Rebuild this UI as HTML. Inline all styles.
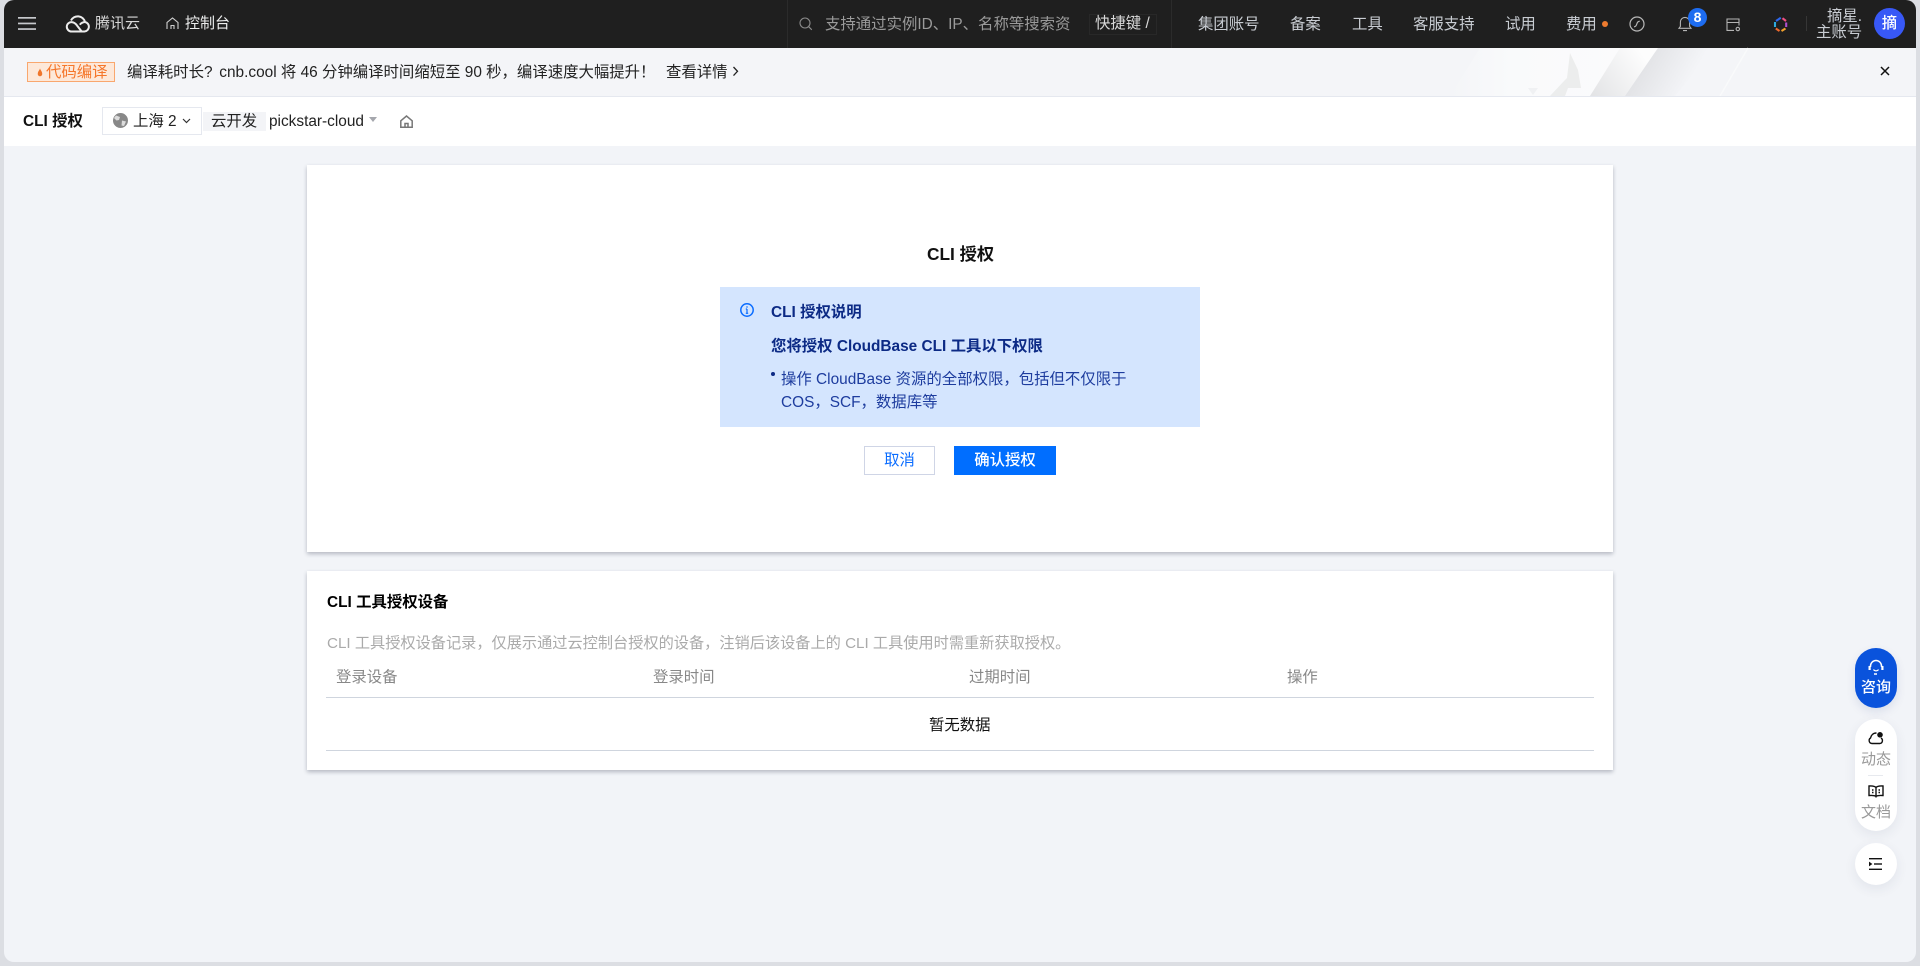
<!DOCTYPE html>
<html lang="zh-CN">
<head>
<meta charset="utf-8">
<title>CLI 授权</title>
<style>
html,body{margin:0;padding:0;width:1920px;height:966px;overflow:hidden;background:#dcdee3;}
body{font-family:"Liberation Sans","Noto Sans CJK SC",sans-serif;font-size:15.4px;position:relative;}
#win{position:absolute;left:4px;top:0;width:1912px;height:962px;background:#f2f4f8;border-radius:10px;overflow:hidden;}
#root{position:absolute;left:-4px;top:0;width:1920px;height:966px;}
.a{position:absolute;white-space:nowrap;}
.t{position:absolute;white-space:nowrap;line-height:20px;height:20px;margin-top:1px;}
svg{position:absolute;overflow:visible;}
.n{color:#c8ccd2;}
.card{position:absolute;background:#fff;box-shadow:0 2px 4px rgba(54,58,80,.32);}
</style>
</head>
<body>
<div id="win"><div id="root">

<!-- top bar -->
<div class="a" style="left:0;top:0;width:1920px;height:48px;background:#1f1f1f"></div>
<svg style="left:18px;top:17px" width="18" height="13" fill="#c6c8cc"><rect width="18" height="1.7"/><rect y="5.6" width="18" height="1.7"/><rect y="11.2" width="18" height="1.7"/></svg>
<svg style="left:65px;top:15px" width="26" height="18" viewBox="0 0 26 18" fill="none" stroke="#ececec" stroke-width="2"><path d="M6.500 16.500h13a4.800 4.800 0 0 0 .5-9.500 7.500 7.500 0 0 0-14-1.500"/><path d="M6.500 16.500a4.700 4.700 0 1 1 0-9.400c2.600 0 4.200 1.500 5.600 3.500l4.300 5.500"/><path d="M20.500 7c-2.500 0-4.400 1-5.700 2.700"/></svg>
<div class="t" style="left:95px;top:13px;font-size:15px;color:#d8d8d8">腾讯云</div>
<svg style="left:166px;top:17px" width="13" height="13" viewBox="0 0 13 13" fill="none" stroke="#d0d0d0" stroke-width="1.1"><path d="M1 12V5.500L6.500 1 12 5.500V12M5 12V8.500h3V12"/></svg>
<div class="t" style="left:185px;top:13px;font-size:15px;color:#eceded">控制台</div>

<div class="a" style="left:787px;top:0;width:1px;height:48px;background:#2b2b2b"></div>
<svg style="left:799px;top:17px" width="14" height="14" viewBox="0 0 14 14" fill="none" stroke="#8b8b8b" stroke-width="1.1"><circle cx="6" cy="6" r="5"/><path d="m9.800 9.800 3 3"/></svg>
<div class="t" style="left:825px;top:14px;color:#9a9a9a">支持通过实例ID、IP、名称等搜索资</div>
<div class="a" style="left:1089px;top:14px;width:66px;height:19px;border:1px solid #282828"></div>
<div class="t" style="left:1095px;top:13px;color:#d8d8d8">快捷键 /</div>
<div class="a" style="left:1171px;top:0;width:1px;height:48px;background:#2b2b2b"></div>

<div class="t n" style="left:1198px;top:14px">集团账号</div>
<div class="t n" style="left:1290px;top:14px">备案</div>
<div class="t n" style="left:1352px;top:14px">工具</div>
<div class="t n" style="left:1413px;top:14px">客服支持</div>
<div class="t n" style="left:1505px;top:14px">试用</div>
<div class="t n" style="left:1566px;top:14px">费用</div>
<div class="a" style="left:1602px;top:20.5px;width:6px;height:6px;border-radius:50%;background:#ed7b2f"></div>
<svg style="left:1629px;top:16px" width="16" height="16" viewBox="0 0 16 16" fill="none" stroke="#b8b8b8" stroke-width="1.2"><circle cx="8" cy="8" r="7"/><path d="M5 10.800c1.600 0 2.300-1 2.800-2.800s1.200-2.800 3-2.800"/></svg>
<svg style="left:1678px;top:15px" width="14" height="17" viewBox="0 0 14 17" fill="none" stroke="#b4b4b4" stroke-width="1.1"><path d="M1 13.300h12l-1.400-2V7a4.600 4.600 0 0 0-9.200 0v4.300zM5 15.600h4"/></svg>
<div class="a" style="left:1688px;top:8px;width:19px;height:19px;border-radius:50%;background:#1d6cf0;color:#fff;font-weight:bold;font-size:14px;line-height:19px;text-align:center">8</div>
<svg style="left:1726px;top:18px" width="15" height="14" viewBox="0 0 15 14" fill="none" stroke="#b4b4b4" stroke-width="1.100"><path d="M8 12.400H1V1h12v6.500M1 4.500h12"/><circle cx="11.800" cy="11" r="1.700"/></svg>
<svg style="left:1773px;top:16px" width="15" height="17" viewBox="0 0 15 17" fill="none" stroke-width="2.100"><path d="M3 5 7.800 1.800" stroke="#2d68ee"/><path d="M9.500 2.200 13 5" stroke="#ef4f83"/><path d="M13.200 6.500V11" stroke="#b04fd0"/><path d="M12.500 12.500 8.500 15" stroke="#f2a12c"/><path d="M6.500 15 2.800 12.500" stroke="#f0692c"/><path d="M2 11V6" stroke="#2eaadc"/></svg>
<div class="a" style="left:1806px;top:16px;width:1px;height:15px;background:#363636"></div>
<div class="t" style="left:1827px;top:6px;font-size:15.4px;color:#c8ccd2;line-height:20px">摘星.</div>
<div class="t" style="left:1816px;top:22px;font-size:15.4px;color:#c8ccd2;line-height:20px">主账号</div>
<div class="a" style="left:1874px;top:8px;width:31px;height:31px;border-radius:50%;background:#3858f6;color:#fff;font-size:15.4px;font-weight:500;line-height:32px;text-align:center">摘</div>

<!-- banner -->
<div class="a" style="left:0;top:48px;width:1920px;height:48px;background:#f4f5f8"></div>
<svg style="left:1400px;top:48px" width="420" height="48" viewBox="0 0 420 48">
<defs>
<linearGradient id="g1" x1="0" y1="0" x2="1" y2="0"><stop offset="0" stop-color="#f4f5f8"/><stop offset="0.35" stop-color="#f9fafb"/><stop offset="1" stop-color="#fbfbfc"/></linearGradient>
<linearGradient id="g2" gradientUnits="userSpaceOnUse" x1="238" y1="15" x2="285" y2="42"><stop offset="0" stop-color="#e0e1e4"/><stop offset="1" stop-color="#f4f5f8"/></linearGradient>
<linearGradient id="g3" gradientUnits="userSpaceOnUse" x1="190" y1="48" x2="245" y2="10"><stop offset="0" stop-color="#e2e3e5"/><stop offset="1" stop-color="#fdfdfd"/></linearGradient>
</defs>
<path d="M50 48 80 0H225L190 48Z" fill="url(#g1)"/>
<path d="M150 48 165 32 167 30 170 5 178 22 181 40 168 40 165 48Z" fill="#eceded"/>
<path d="M128 40h10l-5 7z" fill="#f0f1f3"/>
<path d="M190 48 220 0H258L225 48Z" fill="url(#g3)"/>
<path d="M225 48 258 0H315L275 48Z" fill="url(#g2)"/>
<path d="M320 48 348 0" stroke="#f9fafb" stroke-width="1.500" fill="none"/>
</svg>
<div class="a" style="left:0;top:96px;width:1920px;height:1px;background:#e5e8ef"></div>

<div class="a" style="left:27px;top:62px;width:86px;height:18px;border:1px solid #f9a76e;background:#fde8d9"></div>
<svg style="left:37px;top:68px" width="6" height="9" viewBox="0 0 7 12"><path d="M3.500 .5C4 3 6.500 4.500 6.500 8a3 3 0 0 1-6 0C.5 4.500 3 3 3.500 .5Z" fill="#f0762b"/></svg>
<div class="t" style="left:46px;top:62px;color:#f5762a">代码编译</div>
<div class="t" style="left:127px;top:62px;color:#222">编译耗时长<span style="margin-right:2.500px">?</span> cnb.cool 将 46 分钟编译时间缩短至 90 秒，编译速度大幅提升！</div>
<div class="t" style="left:666px;top:62px;color:#222">查看详情</div>
<svg style="left:732px;top:66px" width="7" height="11" fill="none" stroke="#222" stroke-width="1.300"><path d="m1.500 1 4 4.300-4 4.300"/></svg>
<svg style="left:1880px;top:66px" width="10" height="10" fill="none" stroke="#111" stroke-width="1.500"><path d="m1 1 8 8M9 1 1 9"/></svg>

<!-- subheader -->
<div class="a" style="left:0;top:97px;width:1920px;height:49px;background:#fff"></div>
<div class="t" style="left:23px;top:111px;font-weight:bold;color:#111">CLI 授权</div>
<div class="a" style="left:102px;top:107px;width:98px;height:26px;border:1px solid #e5e8ef"></div>
<svg style="left:113px;top:113px" width="15" height="15" viewBox="0 0 15 15"><circle cx="7.500" cy="7.500" r="7.500" fill="#888"/><path d="M3 2.500 7 4 6 7 3.500 7.500 1 5ZM9 7.500l4 1-2 4.500-2.500-.5z" fill="#dcdcdc"/></svg>
<div class="t" style="left:133px;top:111px;color:#222">上海 2</div>
<svg style="left:182px;top:118px" width="9" height="6" fill="none" stroke="#333" stroke-width="1.200"><path d="m1 1 3.500 3.500L8 1"/></svg>
<div class="a" style="left:203px;top:112px;width:63px;height:19px;background:#f3f4f7"></div>
<div class="t" style="left:211px;top:111px;color:#222">云开发</div>
<div class="t" style="left:269px;top:111px;color:#222">pickstar-cloud</div>
<svg style="left:369px;top:117px" width="8" height="5"><path d="M0 0h8L4 5z" fill="#a5a7ad"/></svg>
<svg style="left:400px;top:115px" width="13" height="13" viewBox="0 0 13 13" fill="none" stroke="#777" stroke-width="1.500"><path d="M.8 5.800 6.500 1l5.700 4.800V12.200H.8zM5 12.500V8.500h3v4"/></svg>

<!-- card 1 -->
<div class="card" style="left:307px;top:165px;width:1306px;height:387px"></div>
<div class="t" style="left:927px;top:243px;font-size:17.3px;font-weight:bold;color:#111">CLI 授权</div>
<div class="a" style="left:720px;top:287px;width:480px;height:140px;background:#d4e5fe"></div>
<svg style="left:740px;top:303px" width="14" height="14" viewBox="0 0 14 14" fill="none" stroke="#0a6cff" stroke-width="1.500"><circle cx="7" cy="7" r="6.200"/><path d="M7 6v4.300M5.800 10.300h2.400M5.800 6h1.200" stroke-width="1.200"/><path d="M7 3.400v1.200" stroke-width="1.500"/></svg>
<div class="t" style="left:771px;top:302px;font-weight:bold;color:#0c2a85">CLI 授权说明</div>
<div class="t" style="left:771px;top:336px;font-weight:bold;color:#0c2a85">您将授权 CloudBase CLI 工具以下权限</div>
<div class="a" style="left:771px;top:372px;width:4px;height:4px;border-radius:50%;background:#0c2a85"></div>
<div class="t" style="left:781px;top:369px;color:#1d3c9e">操作 CloudBase 资源的全部权限，包括但不仅限于</div>
<div class="t" style="left:781px;top:392px;color:#1d3c9e">COS，SCF，数据库等</div>
<div class="a" style="left:864px;top:446px;width:69px;height:27px;border:1px solid #cfd5e6;background:#fff;color:#0a6cff;text-align:center;line-height:27px">取消</div>
<div class="a" style="left:954px;top:446px;width:102px;height:29px;background:#006eff;color:#fff;text-align:center;line-height:30px;font-weight:500">确认授权</div>

<!-- card 2 -->
<div class="card" style="left:307px;top:571px;width:1306px;height:199px"></div>
<div class="t" style="left:327px;top:592px;font-weight:bold;color:#000">CLI 工具授权设备</div>
<div class="t" style="left:327px;top:633px;font-size:15.2px;color:#aaa">CLI 工具授权设备记录，仅展示通过云控制台授权的设备，注销后该设备上的 CLI 工具使用时需重新获取授权。</div>
<div class="t" style="left:336px;top:667px;color:#888">登录设备</div>
<div class="t" style="left:653px;top:667px;color:#888">登录时间</div>
<div class="t" style="left:969px;top:667px;color:#888">过期时间</div>
<div class="t" style="left:1287px;top:667px;color:#888">操作</div>
<div class="a" style="left:326px;top:697px;width:1268px;height:1px;background:#cfd5de"></div>
<div class="t" style="left:929px;top:715px;color:#111">暂无数据</div>
<div class="a" style="left:326px;top:750px;width:1268px;height:1px;background:#cfd5de"></div>

<!-- floating -->
<div class="a" style="left:1855px;top:648px;width:42px;height:60px;border-radius:21px;background:#0a53dc;box-shadow:0 4px 10px rgba(0,40,120,.1)"></div>
<svg style="left:1867px;top:659px" width="18" height="17" viewBox="0 0 18 17" fill="none" stroke="#fff" stroke-width="1.500"><path d="M3.500 8V7a5.500 5.500 0 0 1 11 0v1"/><path d="M6.500 10.500c1 1.800 4 1.800 5 0" stroke-width="1.200"/><path d="M7 15h3"/><rect x="1.500" y="7" width="2.200" height="4" fill="#fff" stroke="none"/><rect x="14.300" y="7" width="2.200" height="4" fill="#fff" stroke="none"/></svg>
<div class="t" style="left:1861px;top:677px;font-size:15px;color:#fff;font-weight:500">咨询</div>

<div class="a" style="left:1855px;top:719px;width:42px;height:112px;border-radius:21px;background:#fff;box-shadow:0 4px 12px rgba(40,50,90,.08)"></div>
<svg style="left:1868px;top:731px" width="16" height="14" viewBox="0 0 16 14" fill="none" stroke="#111" stroke-width="1.400"><path d="M4 12.500h8a3 3 0 0 0 1-5.500 M4 12.500a3 3 0 0 1-1.500-5.500c.6-3 2.800-5 6-5"/><circle cx="12" cy="3.800" r="2.800" fill="#111" stroke="none"/></svg>
<div class="t" style="left:1861px;top:749px;font-size:15px;color:#999">动态</div>
<div class="a" style="left:1868px;top:775px;width:15px;height:1px;background:#e7e9ee"></div>
<svg style="left:1868px;top:785px" width="16" height="13" viewBox="0 0 16 13" fill="none" stroke="#111" stroke-width="1.400"><path d="M8 2.500C6.500 .8 3.500 .8 1 1v9.500c2.500-.2 5.500-.2 7 .8 1.500-1 4.500-1 7-.8V1C12.500 .8 9.500 .8 8 2.500zM8 2.500V12.500"/><path d="M4 5h1.500M10.500 5H12M4 7.500h1.500M10.500 7.500H12" stroke-width="1.600"/></svg>
<div class="t" style="left:1861px;top:802px;font-size:15px;color:#999">文档</div>

<div class="a" style="left:1855px;top:843px;width:42px;height:42px;border-radius:50%;background:#fff;box-shadow:0 4px 12px rgba(40,50,90,.08)"></div>
<svg style="left:1869px;top:858px" width="14" height="12" viewBox="0 0 14 12" fill="#111"><rect width="13" height="1.400"/><rect x="5" y="5.300" width="8" height="1.400"/><rect y="10.600" width="13" height="1.400"/><path d="M0 3.600 3.400 6 0 8.400z"/></svg>

</div></div>
</body>
</html>
